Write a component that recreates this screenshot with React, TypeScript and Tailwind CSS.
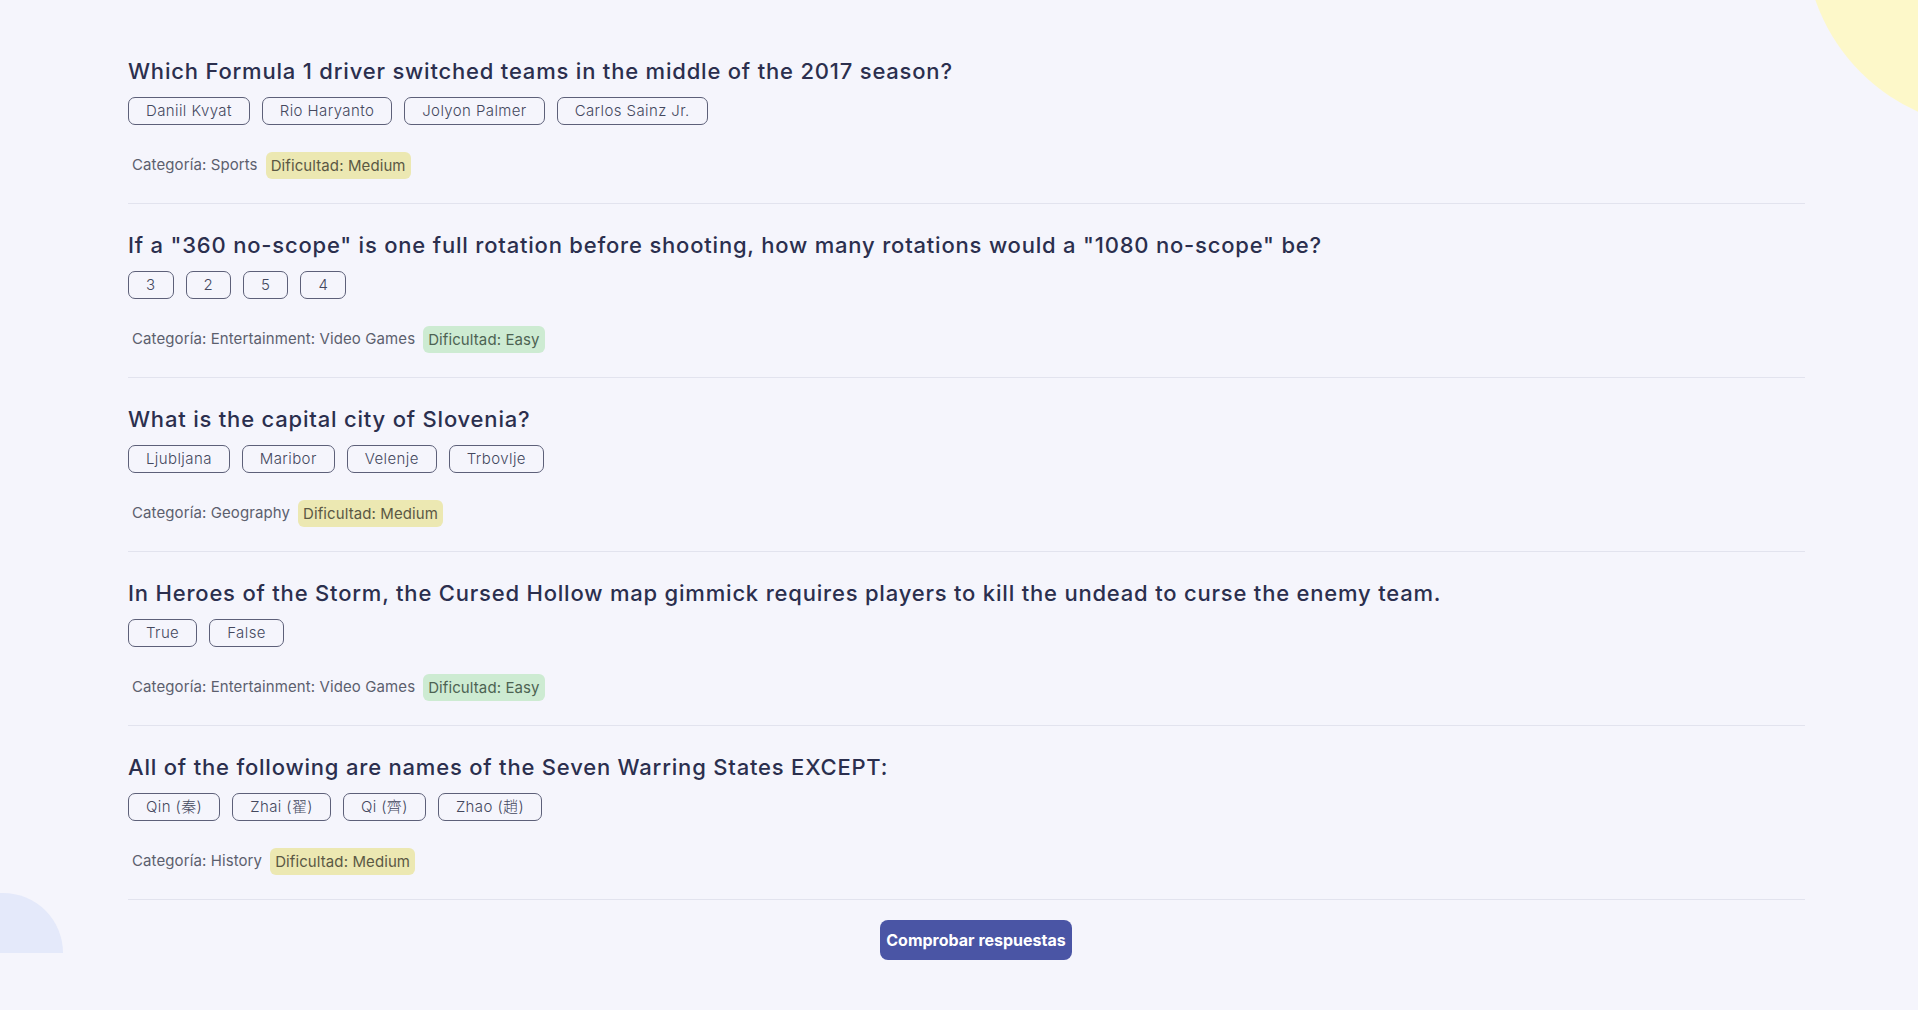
import React from 'react'

type Question = {
  question: string
  answers: string[]
  category: string
  difficulty: 'easy' | 'medium'
}

const questions: Question[] = [
  {
    question: 'Which Formula 1 driver switched teams in the middle of the 2017 season?',
    answers: ['Daniil Kvyat', 'Rio Haryanto', 'Jolyon Palmer', 'Carlos Sainz Jr.'],
    category: 'Sports',
    difficulty: 'medium',
  },
  {
    question: 'If a "360 no-scope" is one full rotation before shooting, how many rotations would a "1080 no-scope" be?',
    answers: ['3', '2', '5', '4'],
    category: 'Entertainment: Video Games',
    difficulty: 'easy',
  },
  {
    question: 'What is the capital city of Slovenia?',
    answers: ['Ljubljana', 'Maribor', 'Velenje', 'Trbovlje'],
    category: 'Geography',
    difficulty: 'medium',
  },
  {
    question: 'In Heroes of the Storm, the Cursed Hollow map gimmick requires players to kill the undead to curse the enemy team.',
    answers: ['True', 'False'],
    category: 'Entertainment: Video Games',
    difficulty: 'easy',
  },
  {
    question: 'All of the following are names of the Seven Warring States EXCEPT:',
    answers: ['Qin (秦)', 'Zhai (翟)', 'Qi (齊)', 'Zhao (趙)'],
    category: 'History',
    difficulty: 'medium',
  },
]

function QuestionBlock({ q }: { q: Question }) {
  return (
    <div className="border-b border-[#e2e3ee] pt-[27px] pb-6">
      <h2 className="text-[22px] font-medium leading-7 tracking-[0.8px] text-[#2b2f4e]">{q.question}</h2>
      <div className="mt-3 flex gap-3">
        {q.answers.map((a) => (
          <button
            key={a}
            className="h-7 rounded-[7px] border border-[#5d6079] px-[17px] text-[15px] font-light tracking-[0.4px] text-[#44485e]"
          >
            {a}
          </button>
        ))}
      </div>
      <div className="mt-[27px] flex items-center gap-2 pl-1 text-[15px] tracking-[0.1px] text-[#5c5f6e]">
        <span>Categoría: {q.category}</span>
        {q.difficulty === 'medium' ? (
          <span className="rounded-md bg-[#ece8b2] px-[5px] py-[4px] leading-[19px] text-[#5b5844]">Dificultad: Medium</span>
        ) : (
          <span className="rounded-md bg-[#cdebd2] px-[5px] py-[4px] leading-[19px] text-[#4d6352]">Dificultad: Easy</span>
        )}
      </div>
    </div>
  )
}

export default function App() {
  return (
    <div
      className="relative min-h-screen overflow-hidden bg-[#f5f5fc]"
      style={{ fontFamily: 'Inter, "Noto Sans CJK SC", sans-serif' }}
    >
      {/* Decorative blobs */}
      <div className="absolute left-[1805px] top-[-252px] h-[380px] w-[380px] rounded-full bg-[#fdf8c9]" />
      <div className="absolute left-0 top-[893px] h-[60px] w-[63px] rounded-tr-full bg-[#e4e9fa]" />

      <div className="relative ml-[128px] w-[1677px] pt-[30px] pb-[51px]">
        {questions.map((q) => (
          <QuestionBlock key={q.question} q={q} />
        ))}
        <div className="mt-5 flex justify-center pl-[19px]">
          <button className="h-10 w-[192px] rounded-lg bg-[#4a55a5] text-[16px] font-bold text-white">
            Comprobar respuestas
          </button>
        </div>
      </div>
    </div>
  )
}
